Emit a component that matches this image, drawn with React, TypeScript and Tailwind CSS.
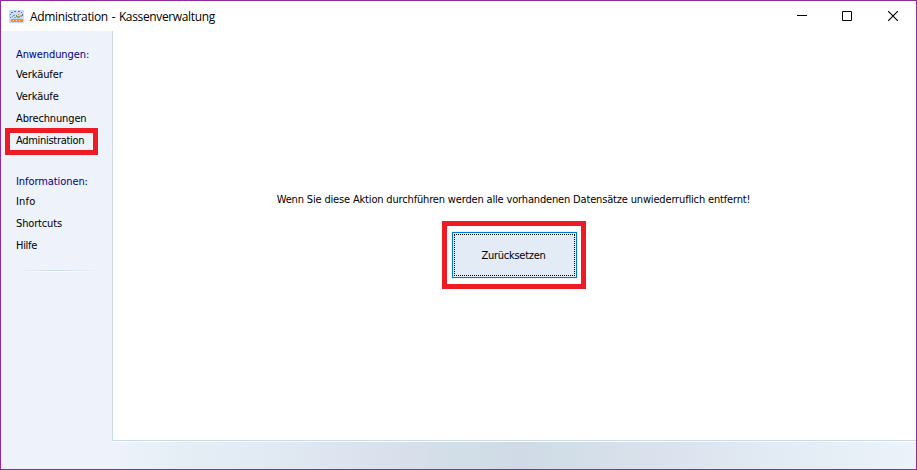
import React from "react";

const itemClass = "flex h-[22px] items-center whitespace-nowrap";

function AppIcon() {
  return (
    <svg width="15" height="13" viewBox="0 0 15 13" shapeRendering="crispEdges">
      <rect width="15" height="13" fill="#c7dcf8" />
      <path d="M1 4h1v1H1zM2 2h2v1H2zM5 1h2v1H5zM9 1h2v1H9zM12 2h1v1h-1zM13 4h1v2h-1zM1 7h1v1H1z" fill="#4a7bab" />
      <path d="M4 5h2v1H4zM3 6h1v1H3zM5 7h1v1H5z" fill="#8298b2" />
      <path d="M7 5h1v2H7z" fill="#2ea8a0" />
      <path d="M9 4h1v1H9zM8 6h3v2H8zM5 7h2v1H5z" fill="#f08a32" />
      <path d="M11 5h2v2h-2z" fill="#9aaec8" />
      <path d="M2 9h12v3H2z" fill="#ff8a24" />
      <path d="M4 10h1v1H4zM7 10h1v1H7zM10 10h1v1h-1z" fill="#ffe8ce" />
    </svg>
  );
}

function TitleBar() {
  return (
    <header className="flex h-[30px] shrink-0 items-center bg-white pl-2">
      <AppIcon />
      <h1 className="ml-[6px] whitespace-nowrap pt-px font-['Open_Sans','Noto_Sans',sans-serif] text-[12px] leading-[16px] tracking-[-0.36px] text-black [word-spacing:1px]">
        Administration - Kassenverwaltung
      </h1>
      <div className="ml-auto flex h-full items-center">
        <button aria-label="Minimieren" className="grid h-full w-[45px] place-items-center pl-px">
          <svg width="10" height="11" shapeRendering="crispEdges"><path d="M0 4h10v1H0z" /></svg>
        </button>
        <button aria-label="Maximieren" className="grid h-full w-[46px] place-items-center">
          <svg width="10" height="10" fill="none" stroke="black"><path d="M.5.5h9v9h-9z" /></svg>
        </button>
        <button aria-label="Schließen" className="grid h-full w-[46px] place-items-center">
          <svg width="10" height="10" stroke="black" strokeWidth="1.15"><path d="M0 0l10 10M10 0L0 10" /></svg>
        </button>
      </div>
    </header>
  );
}

function Sidebar() {
  return (
    <nav className="relative w-[111px] shrink-0 bg-[#edf2fb] pl-[15px] pt-[15px]">
      <h2 className="flex h-[18px] items-center tracking-[-0.1px] text-[#00008b]">Anwendungen:</h2>
      <ul>
        <li className={itemClass + " tracking-[-0.1px]"}>Verkäufer</li>
        <li className={itemClass + " tracking-[-0.1px]"}>Verkäufe</li>
        <li className={itemClass + " tracking-[-0.14px]"}>Abrechnungen</li>
        <li className={itemClass}>Administration</li>
      </ul>
      <h2 className="mt-[21px] flex h-[18px] items-center tracking-[-0.08px] text-[#00008b]">Informationen:</h2>
      <ul>
        <li className={itemClass + " tracking-[0.2px]"}>Info</li>
        <li className={itemClass + " tracking-[-0.15px]"}>Shortcuts</li>
        <li className={itemClass}>Hilfe</li>
      </ul>
      <div className="mt-[13px] h-px w-[82px] bg-linear-to-r from-[#edf2fb] via-[#cbd9e8] to-[#edf2fb]" />
      <div className="h-px w-[82px] bg-linear-to-r from-[#edf2fb] via-white to-[#edf2fb]" />
      <div className="absolute left-[4px] top-[97px] h-[27px] w-[93px] border-5 border-[#ed1c24]" />
    </nav>
  );
}

export default function App() {
  return (
    <div className="flex h-[470px] w-[917px] flex-col overflow-hidden border border-[#902b9d] bg-white font-['DejaVu_Sans_Condensed','DejaVu_Sans',sans-serif] text-[11px] leading-[14px] tracking-[-0.3px] text-black">
      <TitleBar />
      <div className="flex h-[410px] shrink-0">
        <Sidebar />
        <main className="flex grow flex-col items-center border-b border-l border-[#ccdae7] bg-white pr-[2px] pt-[162px]">
          <p className="whitespace-nowrap tracking-[-0.165px]">
            Wenn Sie diese Aktion durchführen werden alle vorhandenen Datensätze unwiederruflich entfernt!
          </p>
          <div className="mt-[14px] h-[68px] w-[144px] border-5 border-[#ed1c24] p-[5px] pt-[6px]">
            <button className="h-[46px] w-[125px] border border-[#0078d7] bg-[#e3ebf6] p-px shadow-[0_0_0_1px_#edf3f8]">
              <span className="flex h-full items-center justify-center border border-dotted border-black pr-px pt-px tracking-[-0.25px]">Zurücksetzen</span>
            </button>
          </div>
        </main>
      </div>
      <footer className="flex h-[28px] shrink-0">
        <div className="w-[111px] bg-[#edf2fb]" />
        <div className="grow border-t border-white bg-[linear-gradient(90deg,#edf2fb_0%,#e9f0f7_5%,#e5eef5_9%,#e1e9f3_20%,#dce2ed_32%,#d9dfea_37%,#d2dee7_42%,#cfdae6_51%,#d2dee7_57%,#dbe1ec_67%,#e2eaf4_82%,#e6eff6_91%,#edf2fb_100%)]" />
      </footer>
    </div>
  );
}
